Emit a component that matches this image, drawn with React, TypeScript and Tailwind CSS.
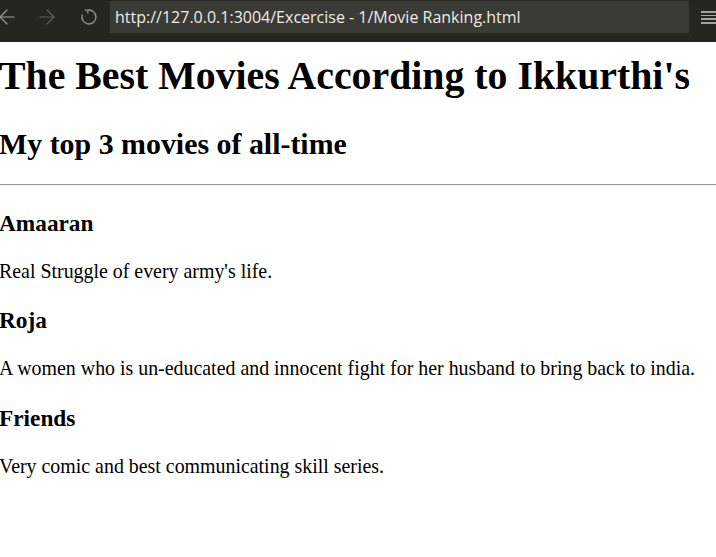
import { ArrowLeft, ArrowRight } from 'lucide-react';

const movies = [
  { title: 'Amaaran', note: "Real Struggle of every army's life." },
  { title: 'Roja', note: 'A women who is un-educated and innocent fight for her husband to bring back to india.' },
  { title: 'Friends', note: 'Very comic and best communicating skill series.' },
];

function ReloadIcon() {
  return (
    <svg width="24" height="24" viewBox="0 0 24 24" fill="none" stroke="currentColor" strokeWidth="1.4" className="ml-[18px] text-[#8f8f8a]">
      <path d="M10.8 5.1 A7 7 0 1 1 5.4 9.6" />
      <path d="M7.6 5.1 H10.8 V8.3" />
    </svg>
  );
}

function BrowserBar() {
  return (
    <div className="flex h-[42px] items-start bg-[#262621] pt-px">
      <div className="flex h-[32px] w-[110px] items-center">
        <ArrowLeft size={24} strokeWidth={1.1} className="-ml-[5px] text-[#a4a49e]" />
        <ArrowRight size={24} strokeWidth={1.1} className="ml-[16px] text-[#62625c]" />
        <ReloadIcon />
      </div>
      <div
        className="flex h-[32px] w-[579px] items-center bg-[#3b3b35] pl-[5px] text-[16px] text-[#ecece6]"
        style={{ fontFamily: '"Open Sans", "Noto Sans", sans-serif' }}
      >
        http://127.0.0.1:3004/Excercise - 1/Movie Ranking.html
      </div>
      <div className="ml-[12px] mt-[10px] flex w-[15px] flex-col gap-[2px]">
        <div className="h-[1.7px] bg-[#a4a49e]" />
        <div className="h-[1.7px] bg-[#a4a49e]" />
        <div className="h-[1.7px] bg-[#a4a49e]" />
        <div className="h-[1.7px] bg-[#a4a49e]" />
      </div>
    </div>
  );
}

export default function App() {
  return (
    <div className="min-h-[557px] overflow-hidden bg-white">
      <BrowserBar />
      <div
        className="-ml-px flex flex-col text-black"
        style={{ fontFamily: '"Liberation Serif", "Times New Roman", serif' }}
      >
        <h1 className="mt-[11px] text-[39.8px] font-bold leading-[46px]">The Best Movies According to Ikkurthi's</h1>
        <h2 className="mt-[27.5px] text-[29.9px] font-bold leading-[34.5px]">My top 3 movies of all-time</h2>
        <hr className="ml-px mt-[23px] border-t border-b border-t-[#9a9a9a] border-b-[#eeeeee]" />
        {movies.map((m, i) => (
          <div key={m.title} className="flex flex-col">
            <h3 className={i === 0 ? 'mt-[23.5px] text-[23.3px] font-bold leading-[27px]' : 'mt-[24.5px] text-[23.3px] font-bold leading-[27px]'}>
              {m.title}
            </h3>
            <p className="mt-[23px] text-[19.9px] leading-[23px]">{m.note}</p>
          </div>
        ))}
      </div>
    </div>
  );
}
